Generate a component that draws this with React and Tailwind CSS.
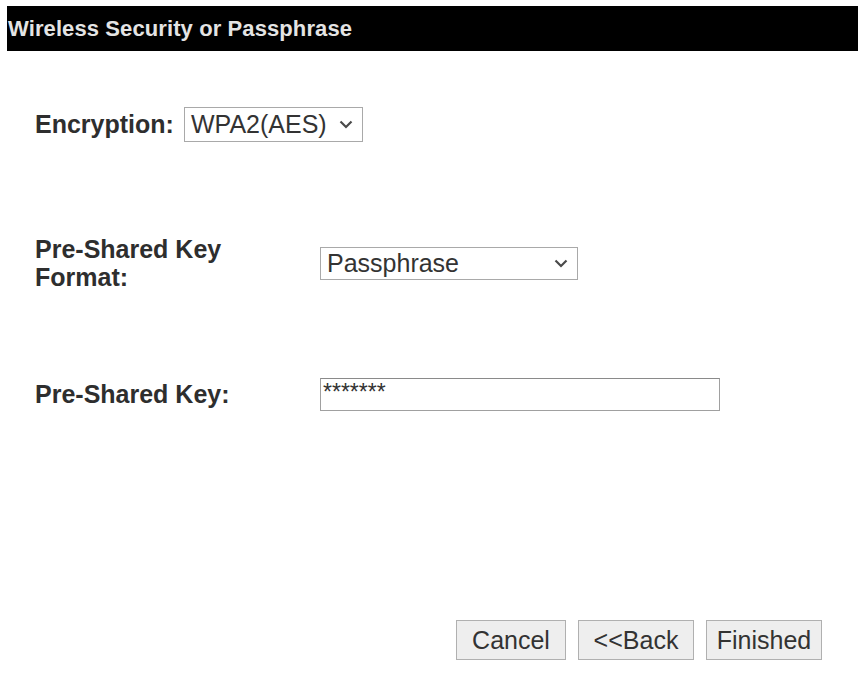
import React from 'react';

const font = { fontFamily: '"Liberation Sans", Arial, sans-serif' };

const Chevron = () => (
  <svg width="14" height="9" viewBox="0 0 14 9" className="shrink-0">
    <path d="M1.5 1.5 L7 7 L12.5 1.5" fill="none" stroke="#4a4a4a" strokeWidth="2.2" />
  </svg>
);

const FakeSelect = ({ value, className }) => (
  <div className={`flex items-center justify-between border border-[#a9a9a9] bg-white pl-[6px] pr-[9px] text-[25px] leading-none text-[#333] ${className}`}>
    <span>{value}</span>
    <Chevron />
  </div>
);

const Button = ({ children, className }) => (
  <button className={`h-[40px] border border-[#b0b0b0] bg-[#eeeeee] text-[25px] leading-none text-[#333] ${className}`}>
    {children}
  </button>
);

const App = () => {
  return (
    <div className="w-[859px] h-[696px] bg-white pt-[6px] pl-[7px] pr-[1px] overflow-hidden" style={font}>
      <div className="h-[45px] bg-black flex items-center pl-[1px]">
        <span className="text-[22px] font-bold text-[#e4e4e4] leading-none tracking-[0.1px]">Wireless Security or Passphrase</span>
      </div>

      <div className="pl-[28px]">
        {/* encryption */}
        <div className="mt-[56px] h-[35px] flex items-center">
          <div className="w-[149px] text-[25px] font-bold text-[#2e2e2e]">Encryption:</div>
          <FakeSelect value="WPA2(AES)" className="w-[179px] h-[35px]" />
        </div>

        {/* key format */}
        <div className="mt-[93px] h-[56px] flex items-center">
          <div className="w-[285px] text-[25px] leading-[28px] font-bold text-[#2e2e2e]">
            Pre-Shared Key<br />Format:
          </div>
          <FakeSelect value="Passphrase" className="w-[258px] h-[33px]" />
        </div>

        {/* key */}
        <div className="mt-[87px] h-[33px] flex items-center">
          <div className="w-[285px] text-[25px] font-bold text-[#2e2e2e]">Pre-Shared Key:</div>
          <div className="w-[400px] h-[33px] border border-[#a0a0a0] border-t-[#8a8a8a] bg-white pl-[2px] text-[23px] leading-[27px] text-[#333]">
            *******
          </div>
        </div>
      </div>

      <div className="mt-[209px] flex justify-end gap-[12px] pr-[36px]">
        <Button className="w-[110px]">Cancel</Button>
        <Button className="w-[116px]">&lt;&lt;Back</Button>
        <Button className="w-[116px]">Finished</Button>
      </div>
    </div>
  );
};

export default App;
